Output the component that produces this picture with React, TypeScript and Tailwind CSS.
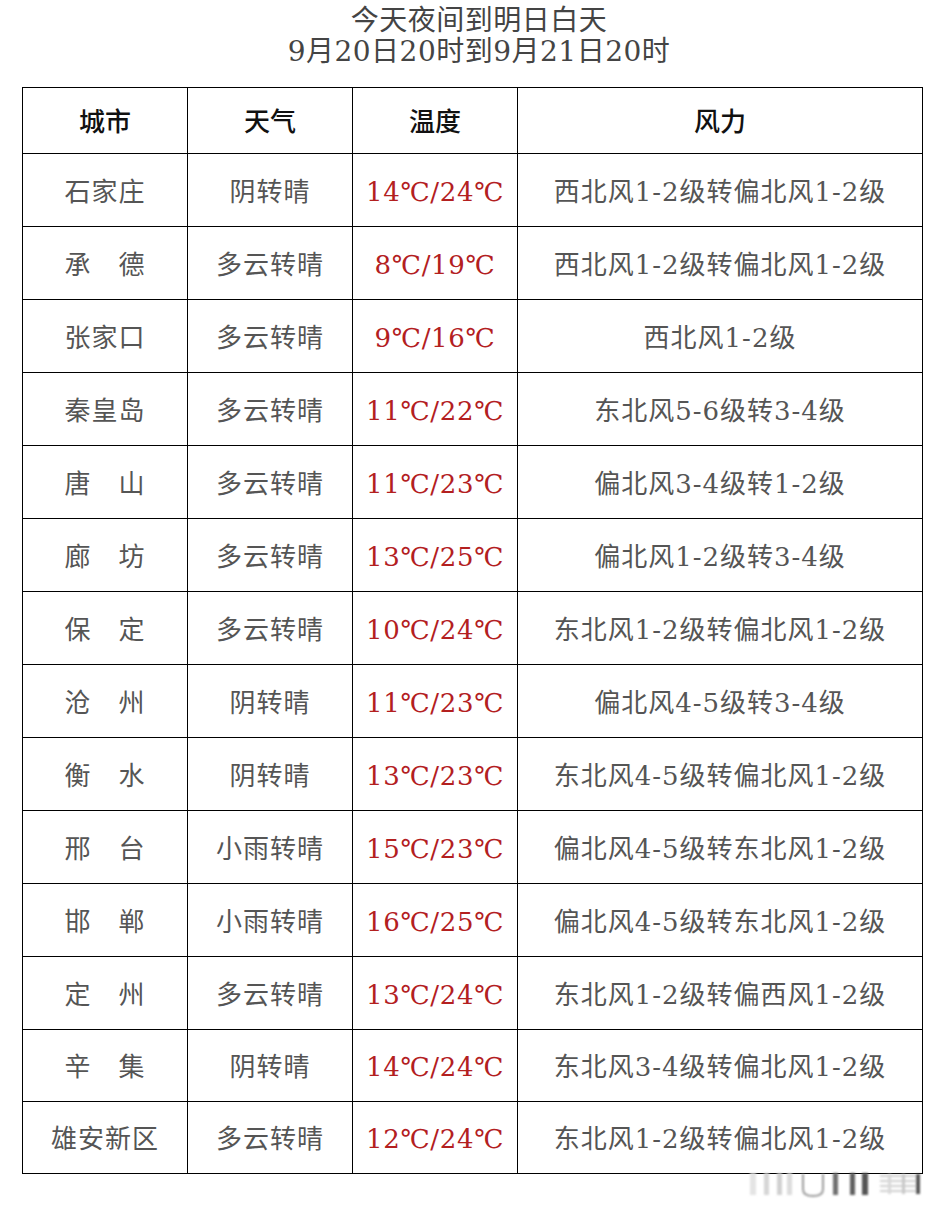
import React from "react";

const rows: [string, string, string, string][] = [
  ["石家庄", "阴转晴", "14℃/24℃", "西北风1-2级转偏北风1-2级"],
  ["承　德", "多云转晴", "8℃/19℃", "西北风1-2级转偏北风1-2级"],
  ["张家口", "多云转晴", "9℃/16℃", "西北风1-2级"],
  ["秦皇岛", "多云转晴", "11℃/22℃", "东北风5-6级转3-4级"],
  ["唐　山", "多云转晴", "11℃/23℃", "偏北风3-4级转1-2级"],
  ["廊　坊", "多云转晴", "13℃/25℃", "偏北风1-2级转3-4级"],
  ["保　定", "多云转晴", "10℃/24℃", "东北风1-2级转偏北风1-2级"],
  ["沧　州", "阴转晴", "11℃/23℃", "偏北风4-5级转3-4级"],
  ["衡　水", "阴转晴", "13℃/23℃", "东北风4-5级转偏北风1-2级"],
  ["邢　台", "小雨转晴", "15℃/23℃", "偏北风4-5级转东北风1-2级"],
  ["邯　郸", "小雨转晴", "16℃/25℃", "偏北风4-5级转东北风1-2级"],
  ["定　州", "多云转晴", "13℃/24℃", "东北风1-2级转偏西风1-2级"],
  ["辛　集", "阴转晴", "14℃/24℃", "东北风3-4级转偏北风1-2级"],
  ["雄安新区", "多云转晴", "12℃/24℃", "东北风1-2级转偏北风1-2级"],
];

const cell = "flex items-center justify-center border-r border-b border-black pt-[4px]";

function Watermark() {
  return (
    <svg className="absolute left-[746px] top-[1171px]" width="178" height="28" viewBox="0 0 178 28">
      <defs>
        <filter id="b" x="-20%" y="-20%" width="140%" height="140%">
          <feGaussianBlur stdDeviation="0.9" />
        </filter>
      </defs>
      <g filter="url(#b)">
        <rect x="4" y="2" width="6" height="22" fill="#e4e4e4" />
        <rect x="18" y="2" width="5" height="22" fill="#d6d6d6" />
        <rect x="31" y="2" width="5" height="22" fill="#d0d0d0" />
        <rect x="41" y="2" width="5" height="22" fill="#dcdcdc" />
        <path d="M57 3 V18 Q57 25 67 25 Q77 25 77 18 V3" fill="none" stroke="#9a9a9a" strokeWidth="2" />
        <rect x="87" y="2" width="5" height="22" fill="#707070" />
        <rect x="104" y="2" width="5" height="22" fill="#606060" />
        <rect x="116" y="2" width="6" height="22" fill="#555" />
        <rect x="134" y="4" width="40" height="2" fill="#cfcfcf" />
        <rect x="134" y="9" width="40" height="2" fill="#cfcfcf" />
        <rect x="134" y="14" width="40" height="2" fill="#cfcfcf" />
        <rect x="134" y="19" width="40" height="2" fill="#cfcfcf" />
        <rect x="142" y="3" width="3" height="20" fill="#d8d8d8" />
        <rect x="156" y="3" width="3" height="20" fill="#c8c8c8" />
        <rect x="170" y="3" width="4" height="20" fill="#555" />
      </g>
    </svg>
  );
}

export default function App() {
  return (
    <div className="relative w-[942px] h-[1218px] bg-white font-['DejaVu_Serif','Noto_Sans_CJK_SC',serif]">
      <div className="pt-[5px] pl-[16px] w-[942px] flex flex-col items-center text-[28px] leading-[31px] tracking-[0.5px] text-[#444]">
        <div>今天夜间到明日白天</div>
        <div>9月20日20时到9月21日20时</div>
      </div>
      <div className="mt-[20px] ml-[22px] w-[901px] border-l border-t border-black grid grid-cols-[165px_165px_165px_405px]">
        {["城市", "天气", "温度", "风力"].map((h) => (
          <div key={h} className={`${cell} h-[66px] text-[26px] text-[#111] font-medium`}>
            {h}
          </div>
        ))}
        {rows.map((r, i) => {
          const h = i >= 12 ? "h-[72px]" : "h-[73px]";
          return (
            <React.Fragment key={i}>
              <div className={`${cell} ${h} text-[26px] tracking-[1px] text-[#555]`}>{r[0]}</div>
              <div className={`${cell} ${h} text-[26px] tracking-[1px] text-[#555]`}>{r[1]}</div>
              <div className={`${cell} ${h} text-[26px] tracking-[0.7px] text-[#b3201f]`}>{r[2]}</div>
              <div className={`${cell} ${h} text-[26px] tracking-[1px] text-[#555]`}>{r[3]}</div>
            </React.Fragment>
          );
        })}
      </div>
      <Watermark />
    </div>
  );
}
